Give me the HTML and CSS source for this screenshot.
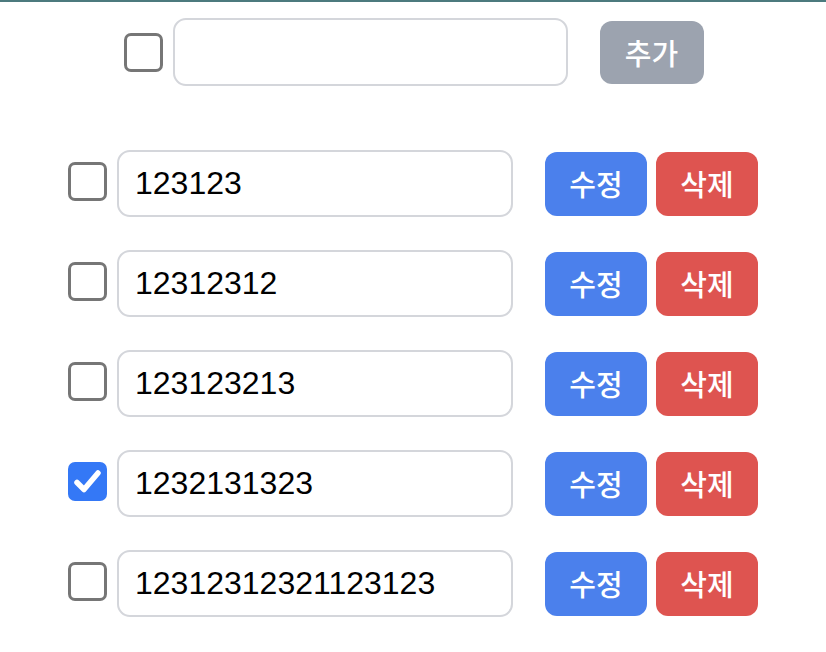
FILE: index.html
```html
<!DOCTYPE html>
<html lang="ko">
<head>
<meta charset="utf-8">
<link rel="stylesheet" href="styles.css">
</head>
<body>
<div class="page">
  <div class="add-row">
    <span class="check"></span>
    <input class="field" type="text" value="">
    <button class="btn btn-gray">추가</button>
  </div>
  <ul class="list">
    <li class="row">
      <span class="check"></span>
      <input class="field" type="text" value="123123">
      <div class="actions"><button class="btn btn-blue">수정</button><button class="btn btn-red">삭제</button></div>
    </li>
    <li class="row">
      <span class="check"></span>
      <input class="field" type="text" value="12312312">
      <div class="actions"><button class="btn btn-blue">수정</button><button class="btn btn-red">삭제</button></div>
    </li>
    <li class="row">
      <span class="check"></span>
      <input class="field" type="text" value="123123213">
      <div class="actions"><button class="btn btn-blue">수정</button><button class="btn btn-red">삭제</button></div>
    </li>
    <li class="row">
      <span class="check checked"><svg viewBox="0 0 39 39" width="39" height="39"><path d="M9 20.5 L16 27.5 L30 11" fill="none" stroke="#fff" stroke-width="5.5" stroke-linecap="round" stroke-linejoin="round"/></svg></span>
      <input class="field" type="text" value="1232131323">
      <div class="actions"><button class="btn btn-blue">수정</button><button class="btn btn-red">삭제</button></div>
    </li>
    <li class="row">
      <span class="check"></span>
      <input class="field" type="text" value="12312312321123123">
      <div class="actions"><button class="btn btn-blue">수정</button><button class="btn btn-red">삭제</button></div>
    </li>
  </ul>
</div>
</body>
</html>
```
FILE: styles.css
```css
html, body {
  margin: 0;
  padding: 0;
  background: #ffffff;
}
body {
  border-top: 2px solid #4c7a7e;
  font-family: "Liberation Sans", Arial, "Noto Sans CJK KR", sans-serif;
}
.page {
  display: flex;
  flex-direction: column;
  align-items: center;
  padding-top: 16px;
}
.add-row {
  display: flex;
  align-items: center;
  margin-left: 1px;
}
.list {
  list-style: none;
  margin: 64px 0 0 0;
  padding: 0;
  display: flex;
  flex-direction: column;
  gap: 33px;
}
.row {
  display: flex;
  align-items: center;
}
.check {
  box-sizing: border-box;
  width: 39px;
  height: 39px;
  border: 3px solid #767676;
  border-radius: 7px;
  background: #fff;
  margin-right: 10px;
  flex: none;
  display: block;
}
.row .check {
  margin-bottom: 5px;
}
.check.checked {
  border: none;
  background: #3478f6;
}
.check svg {
  display: block;
}
.field {
  box-sizing: border-box;
  width: 396px;
  height: 67px;
  border: 2px solid #d4d6db;
  border-radius: 13px;
  padding: 0 16px;
  margin: 0;
  font-family: "Liberation Sans", Arial, sans-serif;
  font-size: 32px;
  color: #000;
  background: #fff;
  outline: none;
}
.add-row .field {
  height: 68px;
  width: 395px;
}
.actions {
  display: flex;
  gap: 9px;
  margin-left: 32px;
}
.add-row .btn {
  margin-left: 32px;
}
.btn {
  box-sizing: border-box;
  width: 102px;
  height: 64px;
  border: none;
  border-radius: 12px;
  color: #fff;
  font-family: "Noto Sans CJK KR", sans-serif;
  font-size: 29px;
  font-weight: 500;
  padding: 0;
  line-height: 1;
  display: flex;
  align-items: center;
  justify-content: center;
}
.btn-gray {
  background: #9ca3af;
  width: 104px;
  height: 63px;
}
.btn-blue {
  background: #4b80ec;
}
.btn-red {
  background: #de5450;
}
```
